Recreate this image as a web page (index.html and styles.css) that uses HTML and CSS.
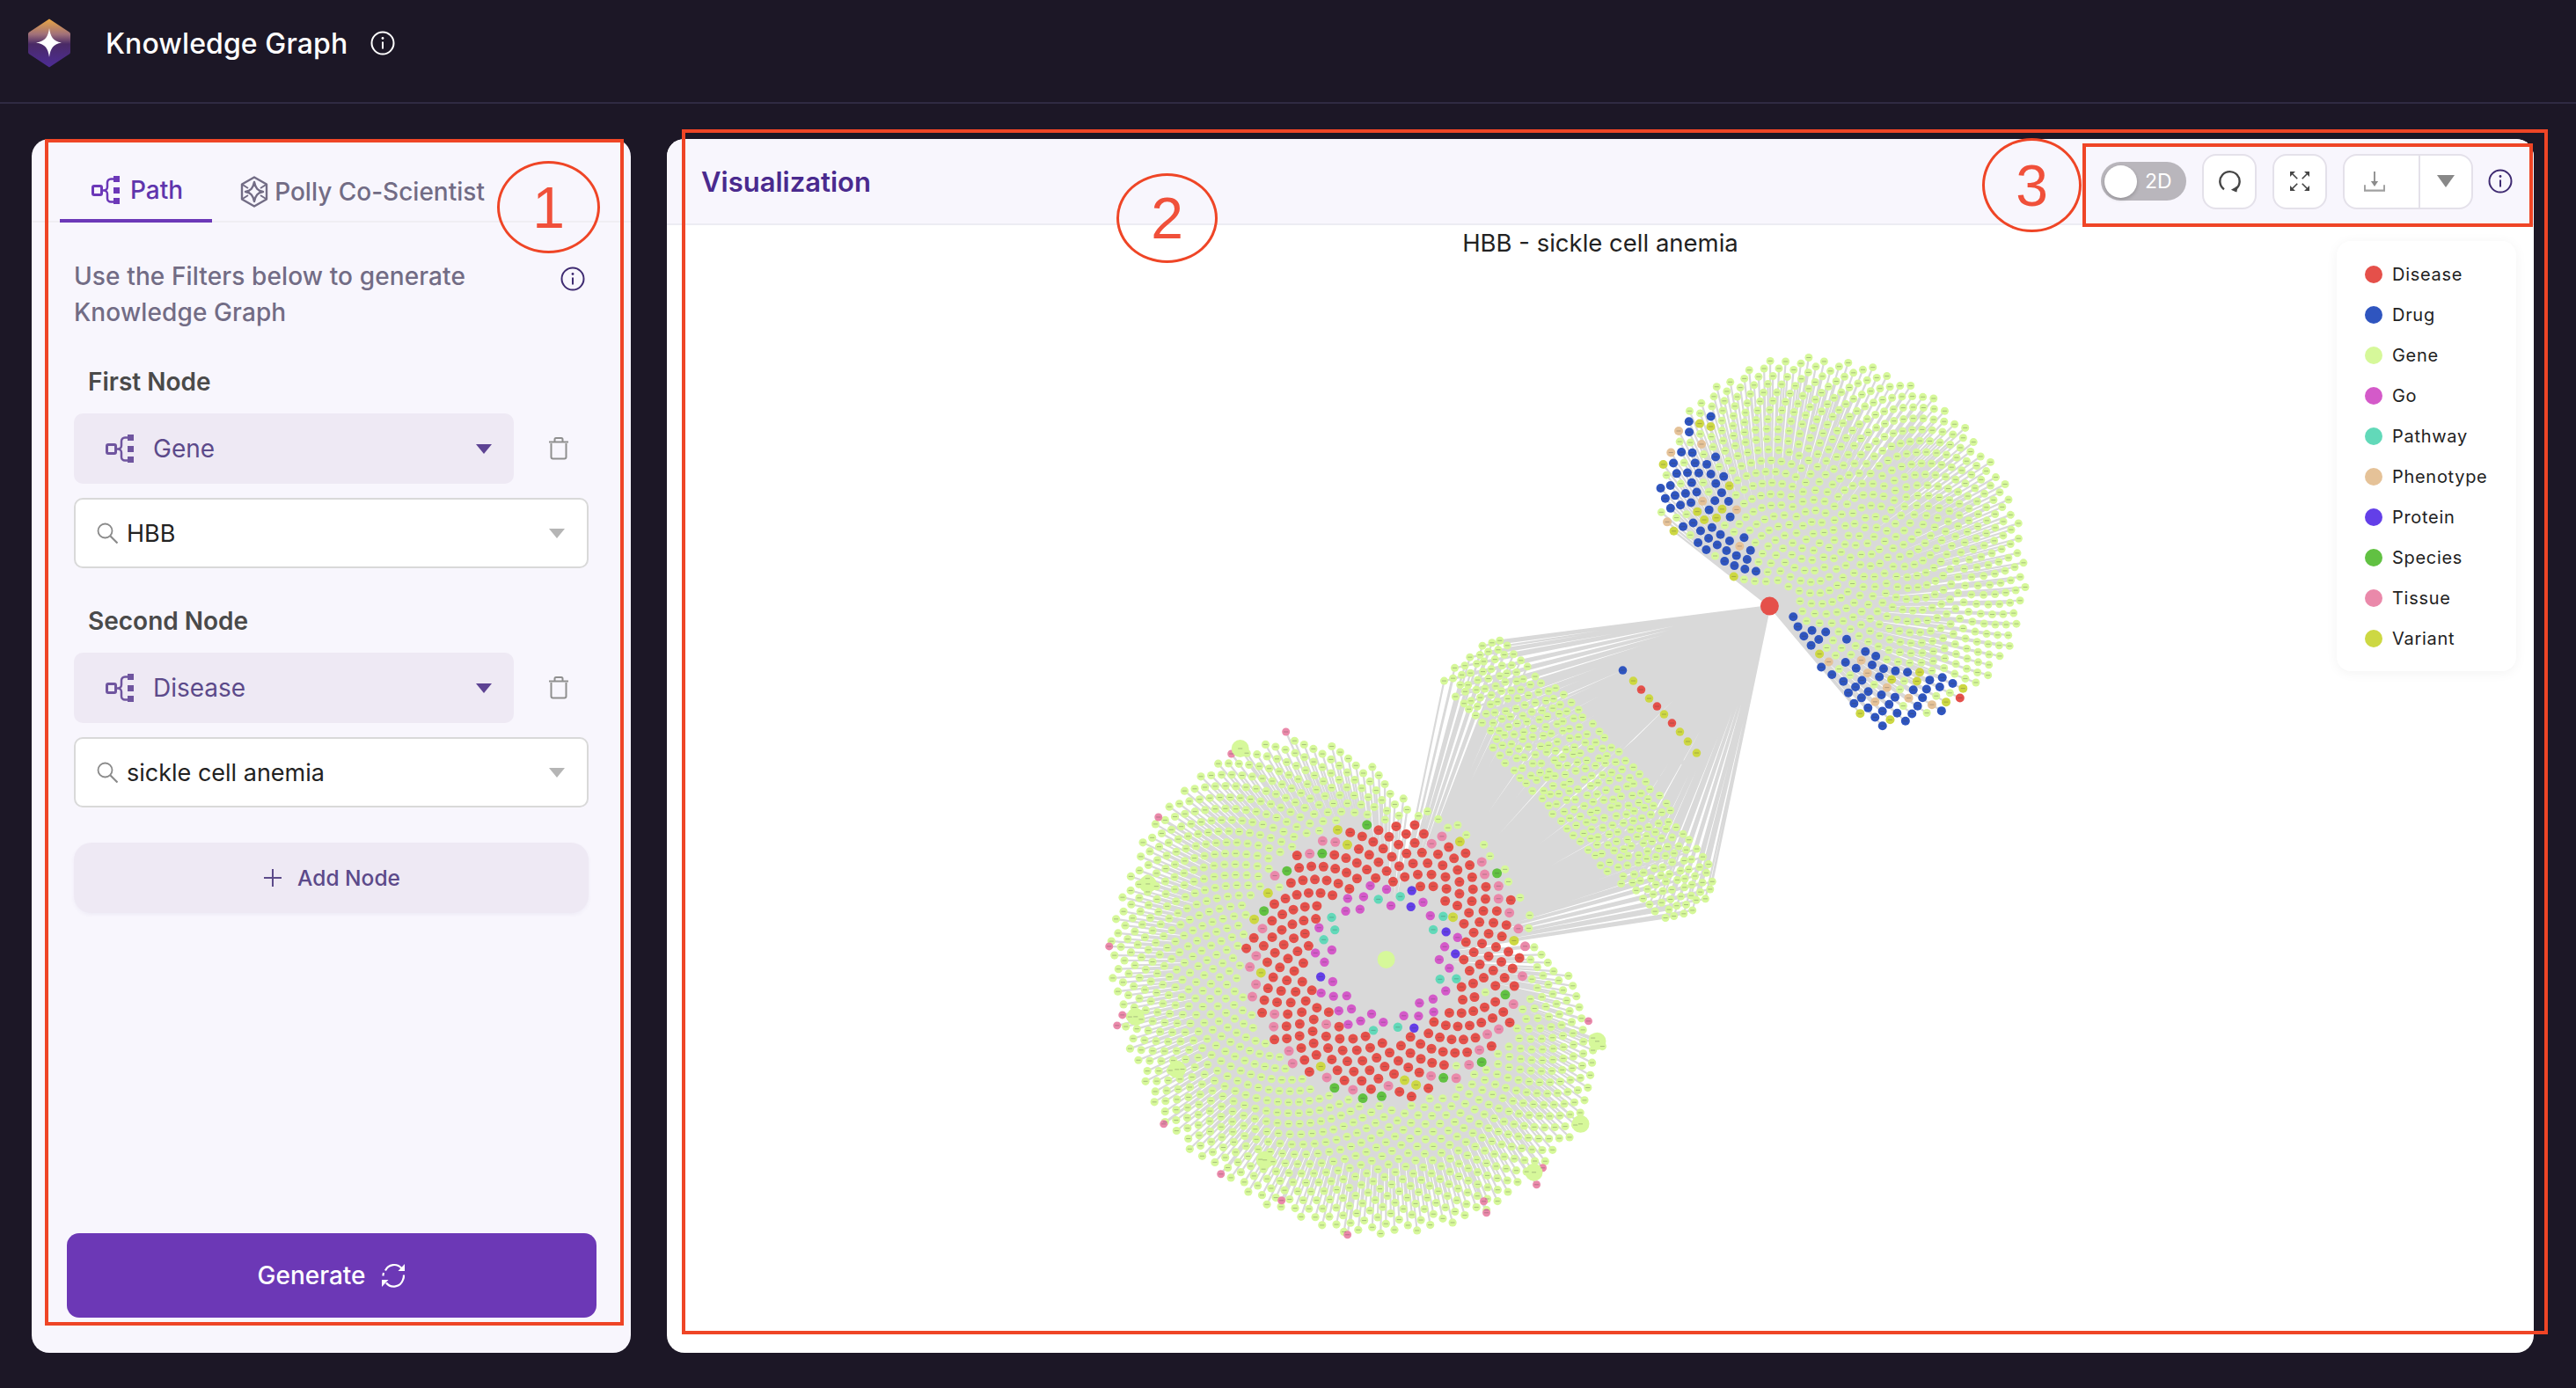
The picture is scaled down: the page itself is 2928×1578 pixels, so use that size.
FILE: index.html
```html
<!DOCTYPE html>
<html lang="en">
<head>
    <meta charset="UTF-8">
    <meta name="viewport" content="width=device-width, initial-scale=1.0">
    <title>Knowledge Graph</title>
    <link rel="stylesheet" href="styles.css">
</head>
<body>
    <svg class="icon-defs" width="0" height="0">
        <symbol id="icon-tree" viewBox="0 0 32 32">
            <rect x="1.5" y="11.5" width="10" height="10" rx="1.5" fill="none" stroke="currentColor" stroke-width="3"/>
            <path d="M11 16.5h5M25 3.5h-3a4 4 0 0 0-4 4v5a4 4 0 0 1-4 4a4 4 0 0 1 4 4v5a4 4 0 0 0 4 4h3" fill="none" stroke="currentColor" stroke-width="2.5"/>
            <rect x="25" y="0" width="7" height="7" fill="currentColor"/>
            <rect x="25" y="13" width="7" height="7" fill="currentColor"/>
            <rect x="25" y="25" width="7" height="7" fill="currentColor"/>
        </symbol>
        <symbol id="icon-info" viewBox="0 0 28 28">
            <circle cx="14" cy="14" r="12.5" fill="none" stroke="currentColor" stroke-width="2"/>
            <path d="M14 12.5v8" stroke="currentColor" stroke-width="2"/>
            <circle cx="14" cy="8.5" r="1.4" fill="currentColor"/>
        </symbol>
        <symbol id="icon-trash" viewBox="0 0 24 26">
            <path d="M3.5 7v15.5a2 2 0 0 0 2 2h13a2 2 0 0 0 2-2V7M1 5.5h22M7.500 5V2.500a1.500 1.500 0 0 1 1.500-1.500h6a1.500 1.500 0 0 1 1.500 1.500V5" fill="none" stroke="currentColor" stroke-width="2"/>
        </symbol>
        <symbol id="icon-search" viewBox="0 0 24 24">
            <circle cx="9.500" cy="9.500" r="8" fill="none" stroke="currentColor" stroke-width="1.800"/>
            <path d="M15.500 15.500l8 8" stroke="currentColor" stroke-width="2.200"/>
        </symbol>
    </svg>

    <header class="topbar">
        <svg class="logo" viewBox="0 0 48 56">
            <defs>
                <linearGradient id="logo-fill" x1="0" y1="0" x2="0" y2="1">
                    <stop offset="0" stop-color="#eaa744"/>
                    <stop offset="0.32" stop-color="#a0707a"/>
                    <stop offset="0.52" stop-color="#4a2a66"/>
                    <stop offset="1" stop-color="#4d2c96"/>
                </linearGradient>
            </defs>
            <path d="M24 0.500L46 15a3 3 0 0 1 2 3V38a3 3 0 0 1-2 3L24 55.500L2 41a3 3 0 0 1-2-3V18a3 3 0 0 1 2-3Z" fill="url(#logo-fill)"/>
            <path d="M24 11C25.500 21 28 25.500 38 27.500C28 29.500 25.500 34 24 44C22.500 34 20 29.500 9 27.500C20 25.500 22.500 21 24 11Z" fill="#fff"/>
        </svg>
        <h1 class="page-title">Knowledge Graph</h1>
        <svg class="title-info"><use href="#icon-info"/></svg>
    </header>

    <main class="workspace">
        <aside class="side-panel">
            <nav class="tabs">
                <div class="tab tab-active">
                    <svg class="tab-icon"><use href="#icon-tree"/></svg>
                    <span>Path</span>
                </div>
                <div class="tab">
                    <svg class="tab-icon polly-icon" viewBox="0 0 32 36">
                        <path d="M16 1.500L30 9.500V26.500L16 34.500L2 26.500V9.500Z" fill="none" stroke="currentColor" stroke-width="2.400" stroke-linejoin="round"/>
                        <path d="M16 7C17.500 14 20 17 26 18C20 19 17.500 22 16 29C14.500 22 12 19 6 18C12 17 14.500 14 16 7Z" fill="none" stroke="currentColor" stroke-width="2.400" stroke-linejoin="round"/>
                        <path d="M2 9.500L9 14M30 9.500L23 14M2 26.500L9 22M30 26.500L23 22" stroke="currentColor" stroke-width="2"/>
                    </svg>
                    <span>Polly Co-Scientist</span>
                </div>
            </nav>

            <div class="filters">
                <div class="intro">
                    <p class="intro-text">Use the Filters below to generate Knowledge Graph</p>
                    <svg class="intro-info"><use href="#icon-info"/></svg>
                </div>

                <section class="node-group">
                    <h3 class="node-label">First Node</h3>
                    <div class="type-row">
                        <div class="type-select">
                            <svg class="type-icon"><use href="#icon-tree"/></svg>
                            <span class="type-name">Gene</span>
                            <i class="caret"></i>
                        </div>
                        <svg class="trash"><use href="#icon-trash"/></svg>
                    </div>
                    <div class="search-box">
                        <svg class="search-icon"><use href="#icon-search"/></svg>
                        <span class="search-value">HBB</span>
                        <i class="caret caret-grey"></i>
                    </div>
                </section>

                <section class="node-group">
                    <h3 class="node-label">Second Node</h3>
                    <div class="type-row">
                        <div class="type-select">
                            <svg class="type-icon"><use href="#icon-tree"/></svg>
                            <span class="type-name">Disease</span>
                            <i class="caret"></i>
                        </div>
                        <svg class="trash"><use href="#icon-trash"/></svg>
                    </div>
                    <div class="search-box">
                        <svg class="search-icon"><use href="#icon-search"/></svg>
                        <span class="search-value">sickle cell anemia</span>
                        <i class="caret caret-grey"></i>
                    </div>
                </section>

                <button class="add-node">
                    <svg class="plus" viewBox="0 0 20 20"><path d="M10 0v20M0 10h20" stroke="currentColor" stroke-width="2"/></svg>
                    Add Node
                </button>
            </div>

            <button class="generate">
                Generate
                <svg class="sync" viewBox="0 0 28 30">
                    <path d="M5 9.500A11 11 0 0 1 23.500 7M26 14.500A12 12 0 0 1 25 20A11 11 0 0 1 6 23.500M2.500 15.500A12 12 0 0 1 3 12" fill="none" stroke="#fff" stroke-width="2.200"/>
                    <path d="M27 2v8h-7.500ZM1 28v-8h7.500Z" fill="#fff"/>
                </svg>
            </button>
        </aside>

        <section class="viz-panel">
            <div class="viz-header">
                <h2 class="viz-title">Visualization</h2>
                <div class="toolbar">
                    <div class="toggle"><span class="knob"></span><span class="toggle-text">2D</span></div>
                    <div class="tool-btn">
                        <svg class="tool-icon" viewBox="0 0 28 28">
                            <path d="M7.500 24A12 12 0 1 1 21.500 24" fill="none" stroke="#454545" stroke-width="2.600"/>
                            <path d="M24.500 19.500L23 27.500L16 24.500Z" fill="#454545"/>
                        </svg>
                    </div>
                    <div class="tool-btn">
                        <svg class="expand-icon" viewBox="0 0 24 24">
                            <path d="M0 0h6.500L0 6.500ZM24 0v6.500L17.500 0ZM0 24v-6.500L6.500 24ZM24 24h-6.500L24 17.500Z" fill="#454545"/>
                            <path d="M3 3l6 6M21 3l-6 6M3 21l6-6M21 21l-6-6" stroke="#454545" stroke-width="1.800"/>
                        </svg>
                    </div>
                    <div class="split-btn">
                        <div class="split-main">
                            <svg class="download-icon" viewBox="0 0 26 26">
                                <path d="M13 1v17" stroke="#8c8c8c" stroke-width="2"/>
                                <path d="M8.500 13h9L13 19.500Z" fill="#8c8c8c"/>
                                <path d="M1 17.500V24.500H25V17.500" fill="none" stroke="#a0a0a0" stroke-width="2.200"/>
                            </svg>
                        </div>
                        <div class="split-arrow"><i class="caret caret-dark"></i></div>
                    </div>
                    <svg class="toolbar-info"><use href="#icon-info"/></svg>
                </div>
            </div>

            <div class="viz-canvas">
                <svg id="graph" class="graph" viewBox="757 256 2123 1282"></svg>
                <div class="graph-title">HBB - sickle cell anemia</div>
                <ul class="legend">
                    <li><i class="dot dot-disease"></i>Disease</li>
                    <li><i class="dot dot-drug"></i>Drug</li>
                    <li><i class="dot dot-gene"></i>Gene</li>
                    <li><i class="dot dot-go"></i>Go</li>
                    <li><i class="dot dot-pathway"></i>Pathway</li>
                    <li><i class="dot dot-phenotype"></i>Phenotype</li>
                    <li><i class="dot dot-protein"></i>Protein</li>
                    <li><i class="dot dot-species"></i>Species</li>
                    <li><i class="dot dot-tissue"></i>Tissue</li>
                    <li><i class="dot dot-variant"></i>Variant</li>
                </ul>
            </div>
        </section>
    </main>

    <!-- red review markers drawn on top of the app -->
    <div class="mark mark-box mark-box-1"></div>
    <div class="mark mark-box mark-box-2"></div>
    <div class="mark mark-box mark-box-3"></div>
    <div class="mark mark-circle mark-circle-1">1</div>
    <div class="mark mark-circle mark-circle-2">2</div>
    <div class="mark mark-circle mark-circle-3">3</div>

    <script src="graph.js"></script>
</body>
</html>
```
FILE: styles.css
```css
* {
    box-sizing: border-box;
}

html, body {
    margin: 0;
    height: 1578px;
    overflow: hidden;
}

body {
    position: relative;
    display: flex;
    flex-direction: column;
    background-color: #1c1726;
    font-family: Inter, "Noto Sans", sans-serif;
    color: #222222;
}

.icon-defs {
    position: absolute;
}

/* top bar */
.topbar {
    display: flex;
    align-items: center;
    height: 118px;
    padding: 0 0 18px 32px;
    border-bottom: 2px solid #2f2a42;
    flex: none;
}

.logo {
    width: 48px;
    height: 56px;
}

.page-title {
    margin: 0 0 0 40px;
    font-size: 32px;
    font-weight: 500;
    letter-spacing: 0.1px;
    color: #ffffff;
}

.title-info {
    width: 28px;
    height: 28px;
    margin-left: 26px;
    color: #ffffff;
}

.workspace {
    flex: 1;
    display: flex;
    gap: 41px;
    padding: 40px 48px 40px 36px;
    min-height: 0;
}

/* left panel */
.side-panel {
    width: 681px;
    display: flex;
    flex-direction: column;
    background-color: #f8f6fd;
    border-radius: 20px;
}

.tabs {
    display: flex;
    gap: 32px;
    height: 95px;
    padding-left: 32px;
    border-bottom: 2px solid #f0eef3;
    flex: none;
}

.tab {
    display: flex;
    align-items: center;
    gap: 12px;
    height: 95px;
    padding: 26px 33px 0 36px;
    font-size: 28px;
    font-weight: 500;
    color: #726c85;
}

.tab + .tab {
    padding: 25px 0 0;
    gap: 7px;
}

.tab-active {
    padding-top: 24px;
    color: #5f35ad;
    border-bottom: 4px solid #6c38b8;
}

.tab-icon {
    width: 32px;
    height: 32px;
    color: #6c38b8;
}

.polly-icon {
    height: 36px;
    color: #726c85;
}

.filters {
    padding: 41px 48px 0 48px;
}

.intro {
    display: flex;
    justify-content: space-between;
    height: 82px;
}

.intro-text {
    width: 480px;
    margin: 0;
    font-size: 28px;
    font-weight: 500;
    letter-spacing: 0.12px;
    line-height: 41px;
    color: #726c85;
}

.intro-info {
    width: 28px;
    height: 28px;
    margin: 9px 4px 0 0;
    color: #3f2b72;
}

.node-group {
    margin-top: 38px;
}

.node-group + .node-group {
    margin-top: 40px;
}

.node-label {
    margin: 0 0 16px 16px;
    font-size: 28px;
    font-weight: 600;
    line-height: 40px;
    color: #4a4a4a;
}

.type-row {
    display: flex;
    align-items: center;
}

.type-select {
    display: flex;
    align-items: center;
    width: 500px;
    height: 80px;
    padding: 0 25px 0 36px;
    background-color: #eee9f4;
    border-radius: 10px;
}

.type-icon {
    width: 32px;
    height: 36px;
    color: #6f559f;
}

.type-name {
    flex: 1;
    margin-left: 22px;
    font-size: 28px;
    color: #5c4a8a;
}

.caret {
    width: 0;
    height: 0;
    border-left: 9px solid transparent;
    border-right: 9px solid transparent;
    border-top: 11px solid #5d4393;
}

.caret-grey {
    border-top-color: #b5b5b5;
}

.caret-dark {
    border-left-width: 10px;
    border-right-width: 10px;
    border-top: 14px solid #888888;
}

.trash {
    width: 24px;
    height: 26px;
    margin-left: 39px;
    color: #8f8f8f;
}

.search-box {
    display: flex;
    align-items: center;
    height: 80px;
    margin-top: 16px;
    padding: 0 25px 0 24px;
    background-color: #ffffff;
    border: 2px solid #d9d9d9;
    border-radius: 10px;
}

.search-icon {
    width: 24px;
    height: 24px;
    color: #8a8a8a;
}

.search-value {
    flex: 1;
    margin-left: 10px;
    font-size: 27px;
    color: #222222;
}

.add-node {
    display: flex;
    align-items: center;
    justify-content: center;
    gap: 18px;
    width: 100%;
    height: 80px;
    margin-top: 40px;
    padding: 0 0 0 2px;
    background-color: #eee9f4;
    border: none;
    border-radius: 20px;
    box-shadow: 0 2px 4px rgba(90, 70, 140, 0.06);
    font-family: inherit;
    font-size: 24.5px;
    font-weight: 500;
    color: #5c4a8a;
}

.plus {
    width: 20px;
    height: 20px;
}

.generate {
    display: flex;
    align-items: center;
    justify-content: center;
    gap: 18px;
    height: 96px;
    margin: auto 39px 40px 40px;
    background-color: #6c38b6;
    border: none;
    border-radius: 14px;
    font-family: inherit;
    font-size: 28px;
    font-weight: 500;
    color: #ffffff;
}

.sync {
    width: 28px;
    height: 30px;
}

/* right panel */
.viz-panel {
    flex: 1;
    display: flex;
    flex-direction: column;
    background-color: #ffffff;
    border-radius: 20px;
    overflow: hidden;
}

.viz-header {
    display: flex;
    align-items: center;
    justify-content: space-between;
    height: 98px;
    padding: 0 24px 0 39px;
    background-color: #f8f6fd;
    border-bottom: 2px solid #ececf3;
    flex: none;
}

.viz-title {
    margin: 0;
    font-size: 31px;
    font-weight: 600;
    color: #4a2a8e;
}

.toolbar {
    display: flex;
    align-items: center;
    gap: 18px;
}

.toggle {
    display: flex;
    align-items: center;
    width: 97px;
    height: 44px;
    padding-left: 4px;
    background-color: #b9b6bc;
    border-radius: 22px;
}

.knob {
    width: 37px;
    height: 37px;
    background-color: #ffffff;
    border-radius: 50%;
    box-shadow: 0 2px 4px rgba(0, 0, 0, 0.2);
}

.toggle-text {
    margin-left: 9px;
    font-size: 23px;
    color: #ffffff;
}

.tool-btn {
    display: flex;
    align-items: center;
    justify-content: center;
    width: 62px;
    height: 63px;
    background-color: #ffffff;
    border: 2px solid #e4e1ea;
    border-radius: 16px;
}

.tool-icon {
    width: 26px;
    height: 26px;
}

.expand-icon {
    width: 22px;
    height: 22px;
}

.split-btn {
    display: flex;
    width: 148px;
    height: 63px;
    background-color: #ffffff;
    border: 2px solid #e4e1ea;
    border-radius: 16px;
}

.split-main {
    display: flex;
    align-items: center;
    justify-content: center;
    width: 86px;
    padding-right: 16px;
    border-right: 2px solid #e4e1ea;
}

.download-icon {
    width: 24px;
    height: 26px;
}

.split-arrow {
    flex: 1;
    display: flex;
    align-items: center;
    justify-content: center;
}

.toolbar-info {
    width: 28px;
    height: 28px;
    margin-left: -1px;
    color: #3f2b72;
}

.viz-canvas {
    position: relative;
    flex: 1;
}

.graph {
    position: absolute;
    top: 0;
    left: 0;
    width: 100%;
    height: 100%;
}

.graph-title {
    position: relative;
    font-size: 27.5px;
    line-height: 41px;
    text-align: center;
    color: #222222;
}

.legend {
    position: absolute;
    top: 18px;
    right: 20px;
    width: 204px;
    height: 489px;
    margin: 0;
    padding: 15px 0 0 32px;
    list-style: none;
    background-color: #ffffff;
    border-radius: 16px;
    box-shadow: 0 2px 14px rgba(0, 0, 0, 0.05);
}

.legend li {
    display: flex;
    align-items: center;
    height: 46px;
    font-size: 20px;
    letter-spacing: 0.7px;
    color: #222222;
}

.dot {
    width: 20px;
    height: 20px;
    margin-right: 11px;
    border-radius: 50%;
}

.dot-disease { background-color: #e5504a; }
.dot-drug { background-color: #2f55bf; }
.dot-gene { background-color: #d6f89a; }
.dot-go { background-color: #d45ac9; }
.dot-pathway { background-color: #62d9b9; }
.dot-phenotype { background-color: #e5c298; }
.dot-protein { background-color: #633fe8; }
.dot-species { background-color: #61c142; }
.dot-tissue { background-color: #ea89aa; }
.dot-variant { background-color: #cdd843; }

/* review markers */
.mark {
    position: absolute;
    pointer-events: none;
}

.mark-box {
    border: 4px solid #ef4526;
}

.mark-box-1 {
    left: 51px;
    top: 158px;
    width: 658px;
    height: 1349px;
}

.mark-box-2 {
    left: 775px;
    top: 147px;
    width: 2121px;
    height: 1370px;
}

.mark-box-3 {
    left: 2367px;
    top: 163px;
    width: 512px;
    height: 95px;
}

.mark-circle {
    display: flex;
    align-items: center;
    justify-content: center;
    border: 3px solid #ef4526;
    border-radius: 50%;
    font-family: "Liberation Sans", Arial, sans-serif;
    font-size: 66px;
    color: #f0503a;
}

.mark-circle-1 {
    left: 565px;
    top: 183px;
    width: 117px;
    height: 105px;
}

.mark-circle-2 {
    left: 1269px;
    top: 197px;
    width: 115px;
    height: 102px;
}

.mark-circle-3 {
    left: 2253px;
    top: 157px;
    width: 113px;
    height: 107px;
}
```
FILE: graph.js
```js
// draws the force graph snapshot into #graph, coordinates are page pixels
const COLORS = {
    disease: '#e5504a', drug: '#2f55bf', gene: '#d6f89a', go: '#d45ac9', pathway: '#62d9b9',
    phenotype: '#e5c298', protein: '#633fe8', species: '#61c142', tissue: '#ea89aa', variant: '#cdd843'
};
const GOLDEN = 2.39996;
const HUB = [2011, 689];
const CORE = [1575, 1091];

// small seeded random so the picture is the same every load
let seed = 42;
function rand() {
    seed = (seed * 1664525 + 1013904223) % 4294967296;
    return seed / 4294967296;
}

function pick(table) {
    let r = rand();
    for (const [type, share] of table) {
        if (r < share) return type;
        r -= share;
    }
    return 'gene';
}

const nodes = [];
const edges = [];

function addNode(x, y, type, r, from) {
    nodes.push({ x, y, type, r });
    from.forEach(p => edges.push(`M${p[0]} ${p[1]}L${x.toFixed(1)} ${y.toFixed(1)}`));
}

// upper right fan around the disease hub
function buildFan() {
    const count = 950;
    const cos = Math.SQRT1_2;
    for (let i = 0; i < count; i++) {
        const rr = Math.sqrt((i + 0.5) / count);
        const a = i * GOLDEN;
        const u = rr * 228 * Math.cos(a);
        const v = rr * 192 * Math.sin(a);
        const x = 2093 + (u - v) * cos;
        const y = 615 + (u + v) * cos;
        const dx = x - HUB[0];
        const dy = y - HUB[1];
        const deg = Math.atan2(dy, dx) * 180 / Math.PI;
        if (deg < -143 || deg > 50 || Math.hypot(dx, dy) < 26) continue;
        let type = 'gene';
        const leftBand = deg < -106 && y > 472;
        if (leftBand || deg > 22) {
            type = pick([['drug', 0.58], ['phenotype', 0.09], ['variant', 0.1], ['disease', 0.02]]);
        }
        addNode(x, y, type, type === 'gene' ? 4.5 : 5, [HUB]);
    }
}

// diagonal band linked to both the hub and the core gene, wider in the middle
function buildBand() {
    const cos = Math.cos(47 * Math.PI / 180);
    const sin = Math.sin(47 * Math.PI / 180);
    for (let row = -6; row <= 6; row++) {
        for (let col = -20; col <= 20; col++) {
            const u = (col + (row % 2 ? 0.5 : 0)) * 11.2 + (rand() - 0.5) * 4;
            const v = row * 10 + (rand() - 0.5) * 4;
            const halfWidth = 38 + 17 * (1 - (u / 195) * (u / 195));
            if (Math.abs(u) > 195 || Math.abs(v) > halfWidth) continue;
            addNode(1798 + u * cos - v * sin, 886 + u * sin + v * cos, 'gene', 4.5, [HUB, CORE]);
        }
    }
    const row = [[1844, 762, 'drug'], [1856, 774, 'variant'], [1865, 784, 'disease'], [1874, 794, 'variant'],
        [1883, 803, 'disease'], [1891, 812, 'variant'], [1900, 822, 'disease'], [1909, 832, 'variant'],
        [1918, 843, 'variant'], [1928, 856, 'variant']];
    row.forEach(n => addNode(n[0], n[1], n[2], 4.8, [HUB, CORE]));
}

// outline of the big disc: [angle in degrees, radius]
const RIM = [[0, 195], [17, 240], [21, 265], [31, 277], [40, 290], [55, 294], [68, 310], [98, 316], [127, 308],
    [144, 314], [168, 307], [181, 315], [212, 306], [233, 292], [250, 269], [270, 207], [279, 177], [351, 170], [360, 195]];

function rimAt(deg) {
    for (let i = 1; i < RIM.length; i++) {
        if (deg <= RIM[i][0]) {
            const t = (deg - RIM[i - 1][0]) / (RIM[i][0] - RIM[i - 1][0]);
            return RIM[i - 1][1] + (RIM[i][1] - RIM[i - 1][1]) * t;
        }
    }
    return 195;
}

function ring(inner, outer, area, visit) {
    const span = Math.PI * (outer * outer - inner * inner);
    const count = Math.round(span / area);
    for (let i = 0; i < count; i++) {
        const r = Math.sqrt(inner * inner + (i + 0.5) * area / Math.PI);
        const a = i * GOLDEN;
        visit(r, a);
    }
}

function buildDisc() {
    const place = (r, a) => [CORE[0] + r * Math.cos(a), CORE[1] + r * Math.sin(a)];

    ring(60, 86, 240, (r, a) => {
        const [x, y] = place(r, a);
        const type = pick([['go', 0.68], ['pathway', 0.17], ['protein', 0.11], ['phenotype', 0.03]]);
        addNode(x, y, type, 5.2, [CORE]);
    });

    ring(88, 160, 205, (r, a) => {
        const [x, y] = place(r, a);
        let type = 'disease';
        if (r > 140) {
            type = pick([['tissue', 0.24], ['species', 0.17], ['variant', 0.1], ['disease', 0.47]]);
        } else if (rand() < 0.05) {
            type = pick([['tissue', 0.4], ['species', 0.3], ['variant', 0.2]]);
        }
        addNode(x, y, type, type === 'gene' ? 4.5 : 5.5, [CORE]);
    });

    ring(164, 320, 150, (r, a) => {
        const deg = ((a * 180 / Math.PI) % 360 + 360) % 360;
        if (r > rimAt(deg)) return;
        const [x, y] = place(r, a);
        addNode(x, y, 'gene', 4.6, [CORE]);
    });

    const tissue = [[1461, 832], [1399, 857], [1316, 929], [1260, 1076], [1275, 1154], [1269, 1166], [1322, 1278], [1387, 1335],
        [1456, 1365], [1531, 1404], [1689, 1379], [1686, 1366], [1746, 1347], [1753, 1328], [1805, 1161]];
    tissue.forEach(p => addNode(p[0], p[1], 'tissue', 4.5, [CORE]));

    const bigGenes = [[1409, 851], [1304, 1005], [1290, 1156], [1337, 1216], [1437, 1319], [1743, 1333], [1796, 1278], [1815, 1184]];
    bigGenes.forEach(p => addNode(p[0], p[1], 'gene', 10, [CORE]));
}

function draw() {
    let labels = '';
    let html = `<path d="${edges.join('')}" fill="none" stroke="#d9d9d9" stroke-width="2.2"/>`;
    nodes.forEach(n => {
        html += `<circle cx="${n.x.toFixed(1)}" cy="${n.y.toFixed(1)}" r="${n.r}" fill="${COLORS[n.type]}"/>`;
        labels += `M${(n.x - 2.5).toFixed(1)} ${n.y.toFixed(1)}h5`;
    });
    // node captions are too small to read at this zoom, so only a faint mark
    html += `<path d="${labels}" stroke="#444" stroke-width="0.7" opacity="0.45"/>`;
    html += `<circle cx="${HUB[0]}" cy="${HUB[1]}" r="10.500" fill="${COLORS.disease}"/>`;
    html += `<circle cx="${CORE[0]}" cy="${CORE[1]}" r="10" fill="${COLORS.gene}"/>`;
    document.getElementById('graph').innerHTML = html;
}

buildFan();
buildBand();
buildDisc();
draw();
```
